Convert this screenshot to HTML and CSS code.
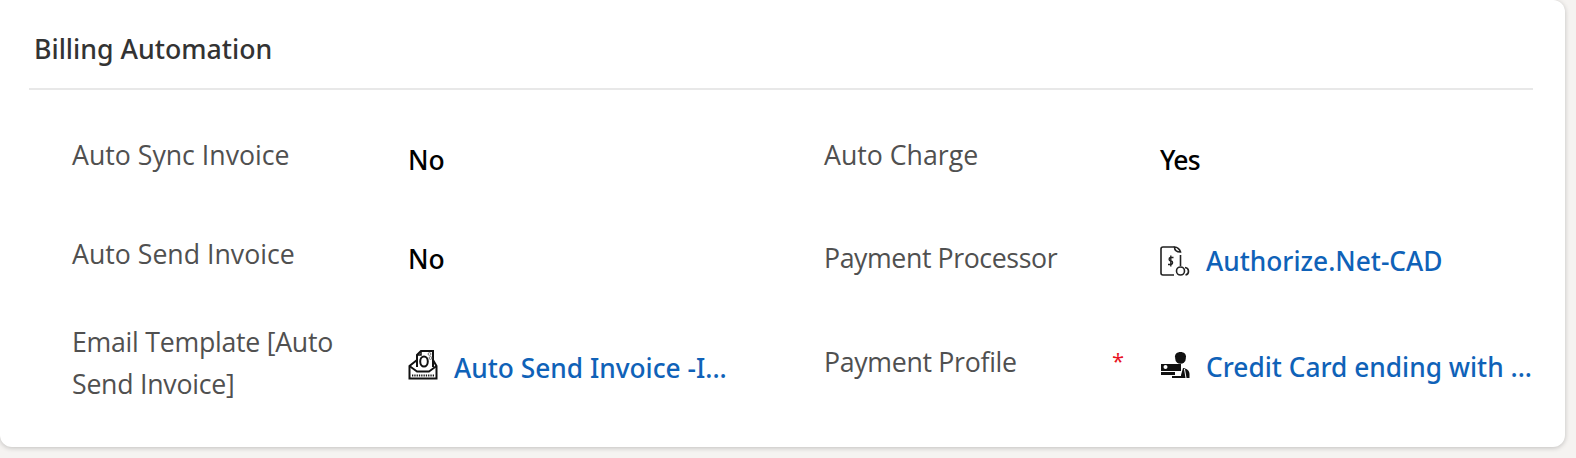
FILE: index.html
```html
<!DOCTYPE html>
<html lang="en">
<head>
  <meta charset="UTF-8" />
  <title>Billing Automation</title>
  <link rel="stylesheet" href="styles.css">
</head>
<body>
  <section class="card">
    <h2 class="card-title">Billing Automation</h2>
    <div class="fields">
      <div class="column">
        <div class="field row-sync">
          <div class="label">Auto Sync Invoice</div>
          <div class="value">No</div>
        </div>
        <div class="field row-send">
          <div class="label">Auto Send Invoice</div>
          <div class="value">No</div>
        </div>
        <div class="field row-template">
          <div class="label">Email Template [Auto Send Invoice]</div>
          <a class="link" href="#">
            <svg class="icon" viewBox="0 0 30 30" fill="none" stroke="#111" stroke-width="2">
              <path d="M9 10 1.500 16v12.500h27V16L25 10"/>
              <path d="M9 17V5l4-4h12v16"/>
              <path d="M13 1.500V5H9.500" stroke-width="1.500"/>
              <path d="M1.500 16 9 21.500h12l7.500-5.500" stroke-width="1.800"/>
              <ellipse cx="16" cy="11.500" rx="3.800" ry="5"/>
              <circle cx="21.500" cy="4" r="1.400" stroke="#777" stroke-width="1"/>
              <circle cx="22.500" cy="8" r="1.400" stroke="#777" stroke-width="1"/>
              <path d="M4 25.500h22" stroke-dasharray="1.300 1" stroke-width="2.200"/>
            </svg>
            <span>Auto Send Invoice -I...</span>
          </a>
        </div>
      </div>
      <div class="column">
        <div class="field row-charge">
          <div class="label">Auto Charge</div>
          <div class="value">Yes</div>
        </div>
        <div class="field row-processor">
          <div class="label">Payment Processor</div>
          <a class="link" href="#">
            <svg class="icon" viewBox="0 0 30 30" fill="none" stroke="#222" stroke-width="1.600">
              <path d="M14 29H3a2 2 0 0 1-2-2V3a2 2 0 0 1 2-2h11.500"/>
              <path d="M14.500 1c0 3 1.500 5 6 5-.5-2.500-3-5-6-5z"/>
              <path d="M20.500 9V20"/>
              <path d="M13.500 11.500H10.500a1.800 1.800 0 0 0 0 3.500h.7a1.800 1.800 0 0 1 0 3.500H8M10.800 9.500v11" stroke-width="1.400"/>
              <circle cx="20.500" cy="25" r="4"/>
              <path d="M25 21.500a3.800 3.800 0 0 1 .5 7.500"/>
            </svg>
            <span>Authorize.Net-CAD</span>
          </a>
        </div>
        <div class="field row-profile">
          <div class="label label-required">Payment Profile<span class="required">*</span></div>
          <a class="link" href="#">
            <svg class="icon" viewBox="0 0 30 30" fill="#111">
              <circle cx="20.500" cy="6.500" r="5.300"/>
              <path d="M15 6c-.5-4 2-6 5.500-6s6 2 5.500 6l-3-2h-5z"/>
              <path d="M1 12h20v11H1z"/>
              <path d="M12 26v-2h9v-1l2-7c4 .5 6.500 2.500 6.500 6v4z"/>
              <circle cx="5.500" cy="15" r="2" fill="#fff"/>
              <path d="M1 19h20v1H1z" fill="#fff"/>
              <path d="M15 20h6v3h-6z" fill="#fff"/>
              <path d="M24.500 17 26 26" stroke="#fff" stroke-width="1"/>
            </svg>
            <span>Credit Card ending with ...</span>
          </a>
        </div>
      </div>
    </div>
  </section>
</body>
</html>
```

FILE: styles.css
```css
:root {
  --page-bg: #f5f3f1;
  --label-color: #505050;
  --title-color: #333333;
  --link-color: #0f62b8;
  --line-color: #e8e8e8;
}

body {
  margin: 0;
  height: 458px;
  overflow: hidden;
  background-color: var(--page-bg);
  font-family: "Open Sans", "Noto Sans", sans-serif;
}

.card {
  box-sizing: border-box;
  width: 1565px;
  height: 447px;
  padding: 0 32px 0 29px;
  background-color: #fff;
  border-radius: 0 12px 12px 12px;
  box-shadow: 0 1px 5px rgba(0, 0, 0, 0.22);
}

.card-title {
  margin: 0;
  height: 90px;
  padding: 31px 0 0 5px;
  box-sizing: border-box;
  border-bottom: 2px solid var(--line-color);
  font-family: "Noto Sans", sans-serif;
  font-size: 26.700px;
  line-height: 36px;
  font-weight: 500;
  color: var(--title-color);
}

.fields {
  display: grid;
  grid-template-columns: 752px 1fr;
  padding: 44px 0 0 43px;
}

.field {
  display: grid;
  grid-template-columns: 336px 1fr;
}

.label {
  font-size: 26.700px;
  line-height: 42px;
  color: var(--label-color);
  padding-right: 24px;
}

.label-required {
  position: relative;
}

.required {
  position: absolute;
  left: 288px;
  top: -2px;
  color: #e81123;
  font-size: 22px;
}

.value {
  font-family: "Noto Sans", sans-serif;
  font-size: 26.500px;
  line-height: 34px;
  font-weight: 500;
  color: #000;
  padding-top: 9px;
}

.link {
  display: flex;
  align-items: center;
  gap: 16px;
  height: 44px;
  font-family: "Noto Sans", sans-serif;
  font-size: 26.300px;
  font-weight: 500;
  color: var(--link-color);
  text-decoration: none;
  white-space: nowrap;
}

.icon {
  width: 30px;
  height: 30px;
  flex-shrink: 0;
}

.row-sync, .row-charge {
  height: 99px;
}

.row-send {
  height: 88px;
}

.row-processor {
  height: 108px;
}

.row-template .label {
  letter-spacing: -0.25px;
}

.row-template .link {
  margin-top: 25px;
}

.row-template .icon {
  margin-bottom: 6px;
}

.row-charge .value {
  letter-spacing: -0.8px;
}

.row-processor .label {
  margin-top: 4px;
  letter-spacing: -0.4px;
}

.row-processor .link {
  margin-top: 6px;
}

.row-profile .label {
  letter-spacing: -0.3px;
}

.row-profile .link {
  margin-top: 4px;
}
```
